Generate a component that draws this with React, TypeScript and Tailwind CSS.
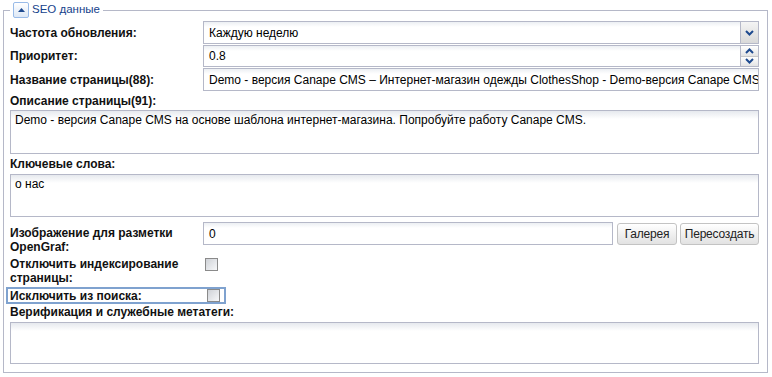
const font = { fontFamily: '"Liberation Sans", Arial, sans-serif' };

/* ───────── Small pieces ───────── */

function Chevron({ up = false }: { up?: boolean }) {
  return (
    <svg width="9" height="6" viewBox="0 0 9 6">
      <path
        d={up ? 'M1 5 L4.5 1.5 L8 5' : 'M1 1 L4.5 4.5 L8 1'}
        fill="none"
        stroke="#1e4a8f"
        strokeWidth="2"
      />
    </svg>
  );
}

function Field({ value, className = '' }: { value: string; className?: string }) {
  return (
    <div
      className={`h-[23px] border border-[#b5b8c8] bg-gradient-to-b from-[#eceff3] via-white via-[5px] to-white px-[5px] flex items-center text-[12px] text-black whitespace-nowrap overflow-hidden ${className}`}
    >
      {value}
    </div>
  );
}

function Area({ value, h = 'h-[43px]' }: { value: string; h?: string }) {
  return (
    <div className={`${h} border border-[#b5b8c8] bg-gradient-to-b from-[#e6e9ee] via-white via-[8px] to-white px-[4px] pt-[2px] text-[12px] text-black leading-[15px]`}>
      {value}
    </div>
  );
}

function Label({ children, className = '' }: { children: React.ReactNode; className?: string }) {
  return <div className={`w-[193px] shrink-0 font-bold text-[12px] leading-[14px] text-[#111] ${className}`}>{children}</div>;
}

function Checkbox() {
  return (
    <div className="w-[13px] h-[13px] border border-[#8a8a8a] bg-gradient-to-br from-[#cfd2d7] to-[#f7f8fa] ml-[2px]" />
  );
}

function Btn({ children, w }: { children: React.ReactNode; w: string }) {
  return (
    <div className={`${w} h-[22px] flex items-center justify-center rounded-[3px] border border-[#c3c3c3] bg-gradient-to-b from-white to-[#e2e2e2] text-[12px] tracking-[-0.2px] text-[#222]`}>
      {children}
    </div>
  );
}

/* ───────── Component ───────── */

export default function App() {
  return (
    <div className="w-[772px] h-[377px] bg-white pt-[2px] pl-[3px] pr-[4px]" style={font}>
      <fieldset className="min-w-0 border border-[#b5b8c8] h-[371px] pl-[6px] pr-[8px] pb-0 m-0">
        <legend className="px-[3px] flex items-center gap-[3px] h-[16px]">
          <span className="w-[16px] h-[16px] rounded-[2px] border border-[#99bbe8] bg-gradient-to-b from-white to-[#dde8f6] flex items-center justify-center">
            <svg width="7" height="4" viewBox="0 0 7 4">
              <path d="M0 4 L3.5 0 L7 4 Z" fill="#1e4a8f" />
            </svg>
          </span>
          <span className="text-[11.5px] not-italic text-[#15428b]">SEO данные</span>
        </legend>

        <div className="flex flex-col pt-[3px]">
          {/* Select */}
          <div className="flex items-center h-[23px]">
            <Label>Частота обновления:</Label>
            <div className="flex-1 h-[23px] border border-[#b5b8c8] flex">
              <div className="flex-1 px-[5px] flex items-center text-[12px] bg-gradient-to-b from-[#eceff3] via-white via-[5px] to-white">
                Каждую неделю
              </div>
              <div className="w-[18px] border-l border-[#b5b8c8] bg-gradient-to-b from-[#f4f4f4] to-[#d9d9d9] flex items-center justify-center">
                <Chevron />
              </div>
            </div>
          </div>

          {/* Spinner */}
          <div className="flex items-center h-[22px] mt-[1px]">
            <Label>Приоритет:</Label>
            <div className="flex-1 h-[22px] border border-[#b5b8c8] flex">
              <div className="flex-1 px-[5px] flex items-center text-[12px] bg-gradient-to-b from-[#eceff3] via-white via-[5px] to-white">
                0.8
              </div>
              <div className="w-[18px] flex flex-col border-l border-[#b5b8c8]">
                <div className="flex-1 flex items-center justify-center bg-gradient-to-b from-white to-[#e4e4e4] border-b border-[#c8c8c8]">
                  <Chevron up />
                </div>
                <div className="flex-1 flex items-center justify-center bg-gradient-to-b from-white to-[#e4e4e4]">
                  <Chevron />
                </div>
              </div>
            </div>
          </div>

          <div className="flex items-center h-[23px] mt-[1px]">
            <Label>Название страницы(88):</Label>
            <Field
              className="flex-1 min-w-0"
              value="Demo - версия Canape CMS – Интернет-магазин одежды ClothesShop - Demo-версия Canape CMS"
            />
          </div>

          <Label className="w-auto mt-[3px] mb-[2px]">Описание страницы(91):</Label>
          <Area value="Demo - версия Canape CMS на основе шаблона интернет-магазина. Попробуйте работу Canape CMS." h="h-[44px]" />

          <Label className="w-auto mt-[3px] mb-[3px]">Ключевые слова:</Label>
          <Area value="о нас" />

          {/* OpenGraph image */}
          <div className="flex items-start mt-[5px]">
            <Label className="pt-[4px]">
              Изображение для разметки
              <br />
              OpenGraf:
            </Label>
            <Field className="flex-1 min-w-0" value="0" />
            <div className="flex gap-[3px] ml-[4px] pt-[1px]">
              <Btn w="w-[60px]">Галерея</Btn>
              <Btn w="w-[79px]">Пересоздать</Btn>
            </div>
          </div>

          <div className="flex items-start mt-[3px]">
            <Label>
              Отключить индексирование
              <br />
              страницы:
            </Label>
            <div className="pt-[1px]">
              <Checkbox />
            </div>
          </div>

          <div className="flex items-center h-[17px] mt-[2px] ml-[-4px] w-[220px] border-2 border-[#7fa2cf] pl-[2px]">
            <Label className="w-[195px]">Исключить из поиска:</Label>
            <Checkbox />
          </div>

          <Label className="w-auto mt-[1px] mb-[3px]">Верификация и служебные метатеги:</Label>
          <Area value="" h="h-[42px]" />
        </div>
      </fieldset>
    </div>
  );
}
